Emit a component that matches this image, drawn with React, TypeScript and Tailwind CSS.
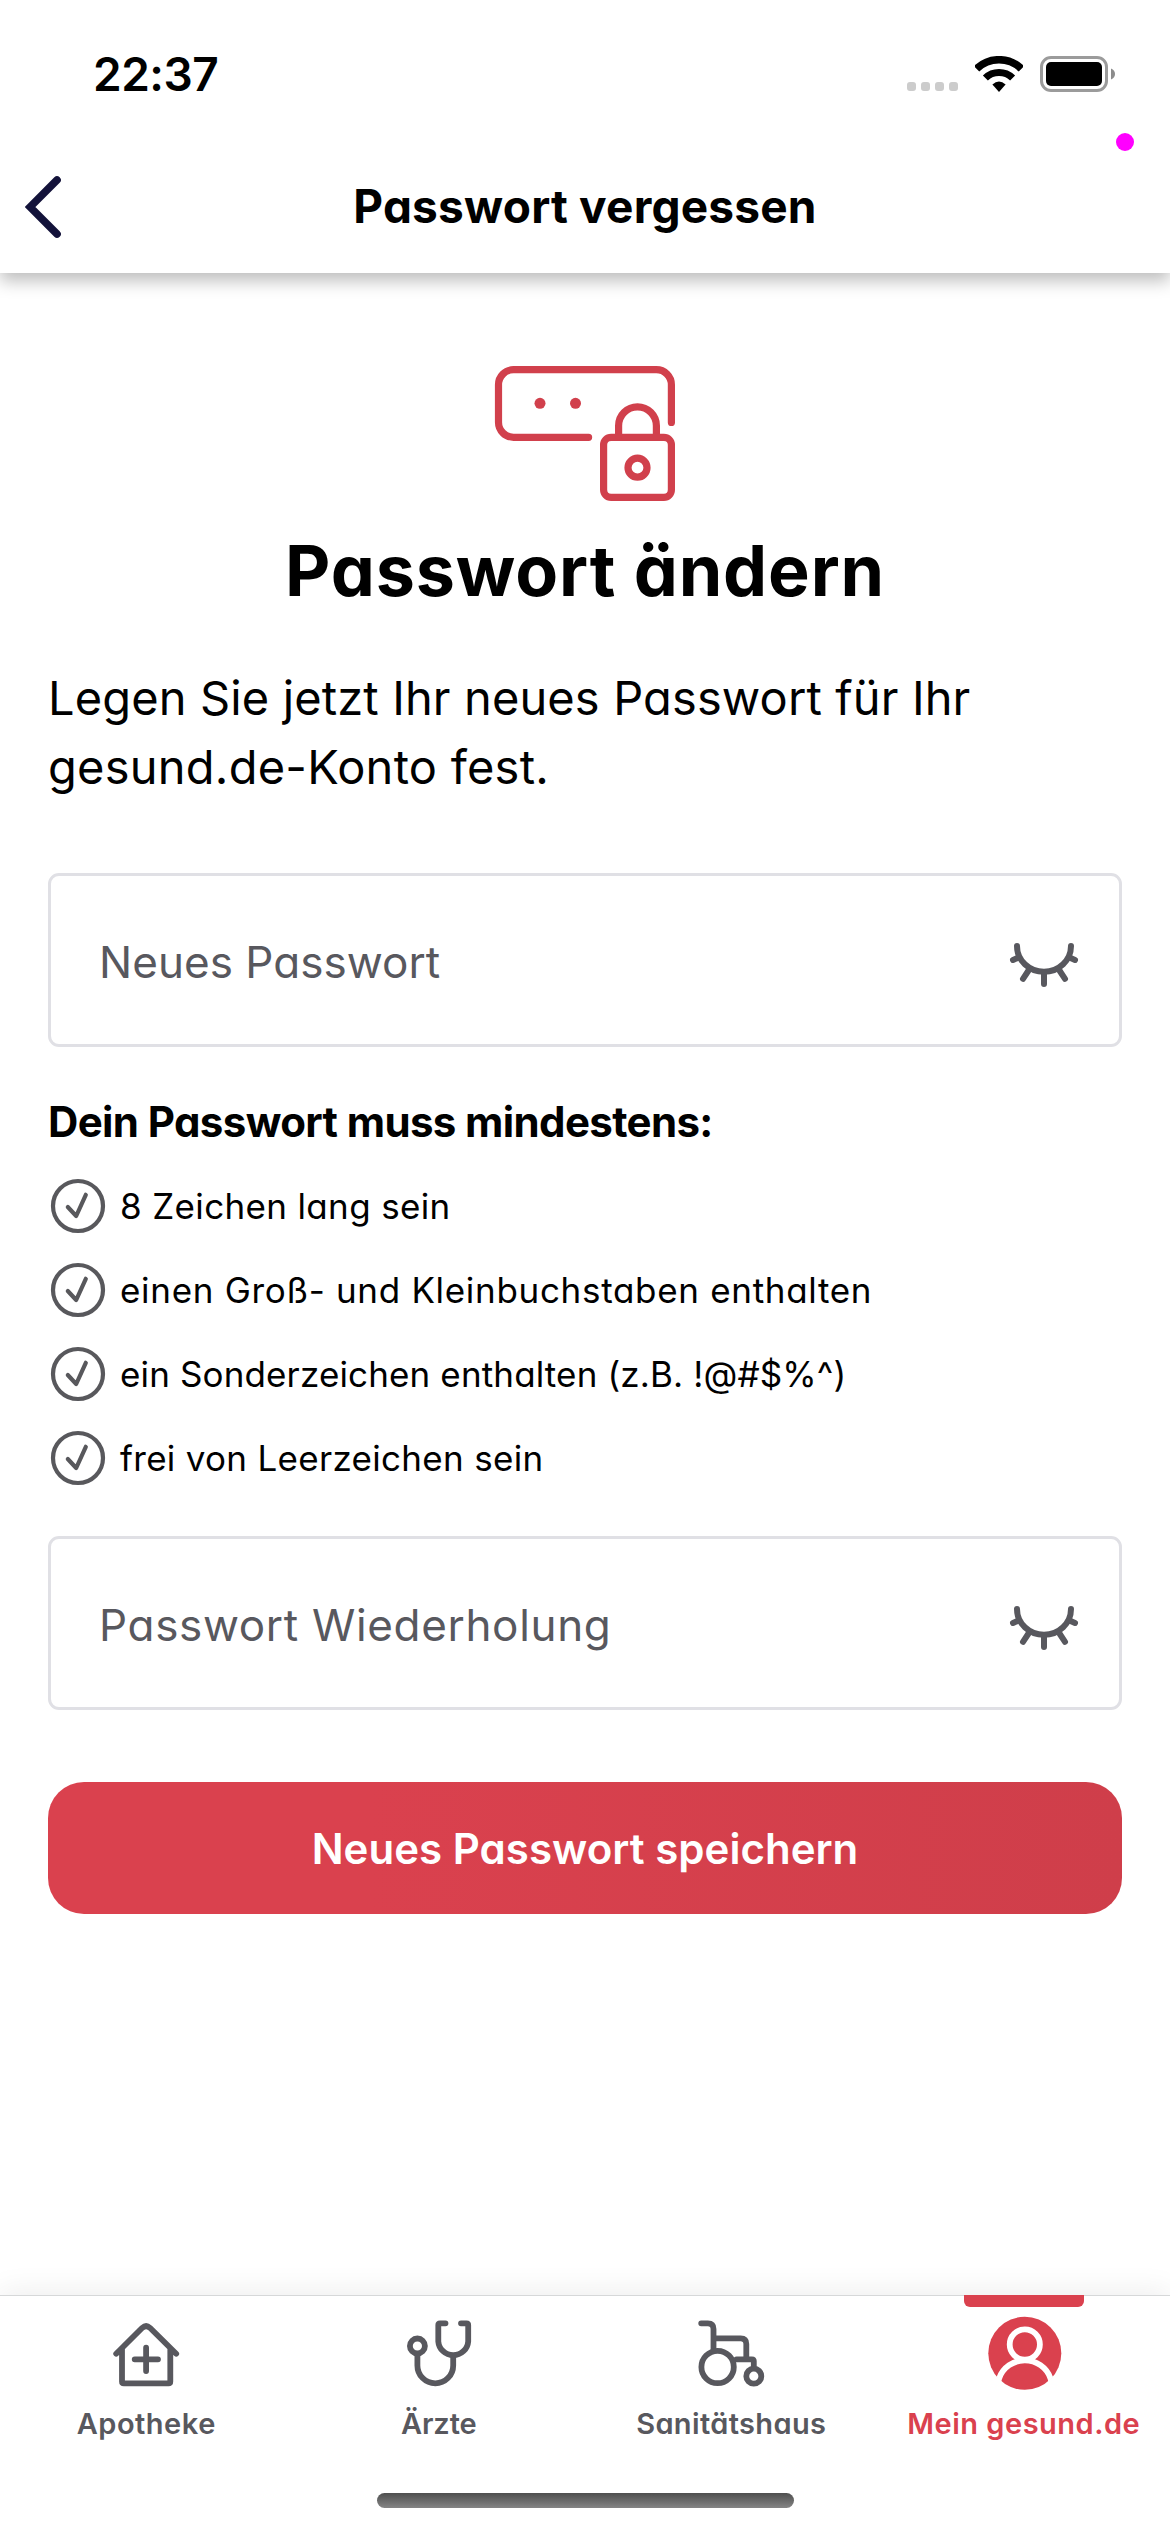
import type { ReactNode } from 'react';

function StatusBar() {
  return (
    <div className="flex h-[148px] items-center justify-between pr-[55px] pl-[93px]">
      <span className="text-[46px] leading-[56px] font-semibold tracking-[-0.5px]">22:37</span>
      <div className="flex items-center">
        <div className="mt-[25px] flex gap-[5px]">
          {[0, 1, 2, 3].map((i) => (
            <span key={i} className="size-[9px] rounded-[3px] bg-[#cccccc]" />
          ))}
        </div>
        <svg className="ml-[17px] h-9 w-12" viewBox="0 0 48 36" fill="none" stroke="#000">
          <path d="M1.6 12.8a32.2 32.2 0 0 1 44.8 0" strokeWidth="7.6" />
          <path d="M10.4 22a19.6 19.6 0 0 1 27.2 0" strokeWidth="7.2" />
          <path d="M24 36l-6.6-7.6q6.6-6 13.2 0z" fill="#000" stroke="none" />
        </svg>
        <svg className="ml-[17px] h-9 w-[75px]" viewBox="0 0 75 36">
          <rect x="1.5" y="1.5" width="65" height="33" rx="9.5" fill="none" stroke="#9b9b9b" strokeWidth="3" />
          <rect x="6" y="6" width="56" height="24" rx="5" fill="#000" />
          <path d="M71 12.5q4 1.7 4 5.5t-4 5.5z" fill="#8c8c8c" />
        </svg>
      </div>
    </div>
  );
}

function EyeClosed() {
  return (
    <svg className="size-[72px]" viewBox="0 0 72 72" fill="none" stroke="#58585e" strokeWidth="6" strokeLinecap="round">
      <path d="M9 22a27 25.8 0 0 0 54 0" />
      <path d="M36 49v11M20.5 46.5L15 54.8M51.5 46.5L57 54.8M10.5 33.5l-5.5 2.500M61.5 33.5l5.5 2.5" />
    </svg>
  );
}

function PasswordField({ children }: { children: ReactNode }) {
  return (
    <div className="flex h-[174px] items-center justify-between rounded-[11px] border-[3px] border-[#e0e0e5] pr-[39px] pl-12 text-[44px] text-[#58585e]">
      {children}
      <EyeClosed />
    </div>
  );
}

function Rule({ children }: { children: ReactNode }) {
  return (
    <li className="flex h-[84px] items-center gap-3 text-[35px]">
      <svg className="size-[60px]" viewBox="0 0 60 60" fill="none" stroke="#58585c" strokeWidth="4.2" strokeLinecap="round" strokeLinejoin="round">
        <circle cx="30" cy="30" r="25" />
        <path d="M19.8 31l8.4 9L37.8 18.8" />
      </svg>
      {children}
    </li>
  );
}

function Tab({ active, label, children }: { active?: boolean; label: ReactNode; children: ReactNode }) {
  return (
    <div className={active ? 'relative flex flex-1 flex-col items-center pt-[22px] text-[#da414e]' : 'relative flex flex-1 flex-col items-center pt-[22px] text-[#58585e]'}>
      {active && <span className="absolute -top-px h-3 w-[120px] rounded-b-[6px] bg-[#da414e]" />}
      <svg className="size-[72px] overflow-visible" viewBox="0 0 72 72" fill="none" stroke="currentColor" strokeWidth="5.8" strokeLinecap="round" strokeLinejoin="round">
        {children}
      </svg>
      <span className="mt-4 text-[29px] leading-9 font-semibold whitespace-nowrap">{label}</span>
    </div>
  );
}

export default function App() {
  return (
    <div className="flex h-[2532px] w-[1170px] flex-col bg-white font-['Inter',sans-serif] text-black [font-feature-settings:'cv11']">
      <header className="relative z-10 h-[273px] shrink-0 bg-white shadow-[0_8px_16px_rgba(0,0,0,0.26)]">
        <StatusBar />
        <span className="absolute top-[133px] right-9 size-[18px] rounded-full bg-[#ff00ff]" />
        <div className="relative flex h-[118px] items-center justify-center">
          <svg className="absolute left-[25px] h-16 w-9" viewBox="0 0 36 64" fill="none" stroke="#13123a" strokeWidth="7.6" strokeLinecap="round">
            <path d="M32 5L5 32L32 59" />
          </svg>
          <h2 className="mb-[2px] text-[46px] font-bold tracking-[0.2px]">Passwort vergessen</h2>
        </div>
      </header>

      <main className="flex flex-1 flex-col px-12 pt-[89px]">
        <svg className="h-[143px] w-[188px] self-center" viewBox="491 362 188 143" fill="none" stroke="#d1404c" strokeWidth="7.2" strokeLinecap="round">
          <path d="M588.6 437.3H513.5a15 15 0 0 1-15-15V384.7a15 15 0 0 1 15-15H656.4a15 15 0 0 1 15 15V422.4" />
          <rect x="603.6" y="437.3" width="67.8" height="60" rx="7.5" />
          <path d="M618.6 436v-10.3a18.9 18.9 0 0 1 37.8 0V436" />
          <circle cx="637.5" cy="467.7" r="9.5" />
          <g fill="#d1404c" stroke="none">
            <circle cx="540" cy="403.3" r="5.5" />
            <circle cx="575.5" cy="403.3" r="5.5" />
          </g>
        </svg>
        <h1 className="mt-6 text-center text-[70px] leading-[84px] font-bold tracking-[0.86px]">Passwort ändern</h1>
        <p className="mt-[50px] text-[47px] leading-[69px] tracking-[0.13px] whitespace-nowrap">
          Legen Sie jetzt Ihr neues Passwort für Ihr
          <br />
          <span className="tracking-[0.25px]">gesund.de-Konto fest.</span>
        </p>
        <div className="mt-[72px]">
          <PasswordField>
            <span className="pt-1 tracking-[0.05px]">Neues Passwort</span>
          </PasswordField>
        </div>
        <h2 className="mt-[50px] text-[42px] leading-[50px] font-bold tracking-[-0.62px]">Dein Passwort muss mindestens:</h2>
        <ul className="mt-[17px]">
          <Rule><span className="tracking-[0.35px]">8 Zeichen lang sein</span></Rule>
          <Rule><span className="tracking-[0.69px]">einen Groß- und Kleinbuchstaben enthalten</span></Rule>
          <Rule><span className="tracking-[0.14px]">{'ein Sonderzeichen enthalten (z.B. !@#$%^)'}</span></Rule>
          <Rule><span className="tracking-[0.3px]">frei von Leerzeichen sein</span></Rule>
        </ul>
        <div className="mt-9">
          <PasswordField>
            <span className="pt-1 tracking-[0.67px]">Passwort Wiederholung</span>
          </PasswordField>
        </div>
        <button className="mt-[72px] h-[132px] rounded-[36px] bg-linear-to-r from-[#da414e] from-30% to-[#cf3e4a] text-[42px] font-semibold tracking-[0.03px] text-white">
          Neues Passwort speichern
        </button>
      </main>

      <nav className="flex h-[237px] shrink-0 flex-col border-t border-[#d6d8d9] bg-white shadow-[0_-4px_28px_rgba(0,0,0,0.07)]">
        <div className="flex">
          <Tab label={<span className="tracking-[0.5px]">Apotheke</span>}>
            <path d="M6.2 35.7L32.3 9.8q3.8-3.4 7.6 0L66.2 35.7M12 30.5V63.5q0 1.8 1.8 1.8H58.5q1.8 0 1.8-1.8V30.5M36.1 29.7V53M24.7 41.3H48" />
          </Tab>
          <Tab label={<span className="tracking-[-0.1px]">Ärzte</span>}>
            <circle cx="14.4" cy="28" r="7.5" />
            <path d="M14.4 37V47.4a17.9 17.9 0 0 0 35.8 0V39" />
            <path d="M42.5 5.3H37q-1.7 0-1.7 1.7V23.4a15 15 0 0 0 29.9 0V7q0-1.7-1.7-1.7H58" />
          </Tab>
          <Tab label={<span className="tracking-[0.36px]">Sanitätshaus</span>}>
            <path d="M6.2 5.3H12.9q5.6 0 5.6 5.6V32M18.5 20.3H45.7q5.6 0 5.6 5.6V41.3M41.5 41.3H57q1.8 0 1.8 1.8V49" />
            <circle cx="22.6" cy="49" r="16.2" />
            <circle cx="58.8" cy="58.2" r="7.5" />
          </Tab>
          <Tab active label={<span className="tracking-[0.5px]">Mein gesund.de</span>}>
            <clipPath id="avatar"><circle cx="36.8" cy="35.3" r="37" /></clipPath>
            <circle cx="36.8" cy="35.3" r="36.5" fill="currentColor" stroke="none" />
            <g stroke="#fff" clipPath="url(#avatar)">
              <circle cx="36.8" cy="26.5" r="15.1" />
              <path d="M9.5 70a27 26.3 0 0 1 1.8-10a27 26.3 0 0 1 51 0a27 26.3 0 0 1 1.8 10" />
            </g>
          </Tab>
        </div>
        <div className="mt-auto mb-6 h-[15px] w-[417px] self-center rounded-full bg-linear-to-b from-[#4f4f4f] to-[#858585]" />
      </nav>
    </div>
  );
}
